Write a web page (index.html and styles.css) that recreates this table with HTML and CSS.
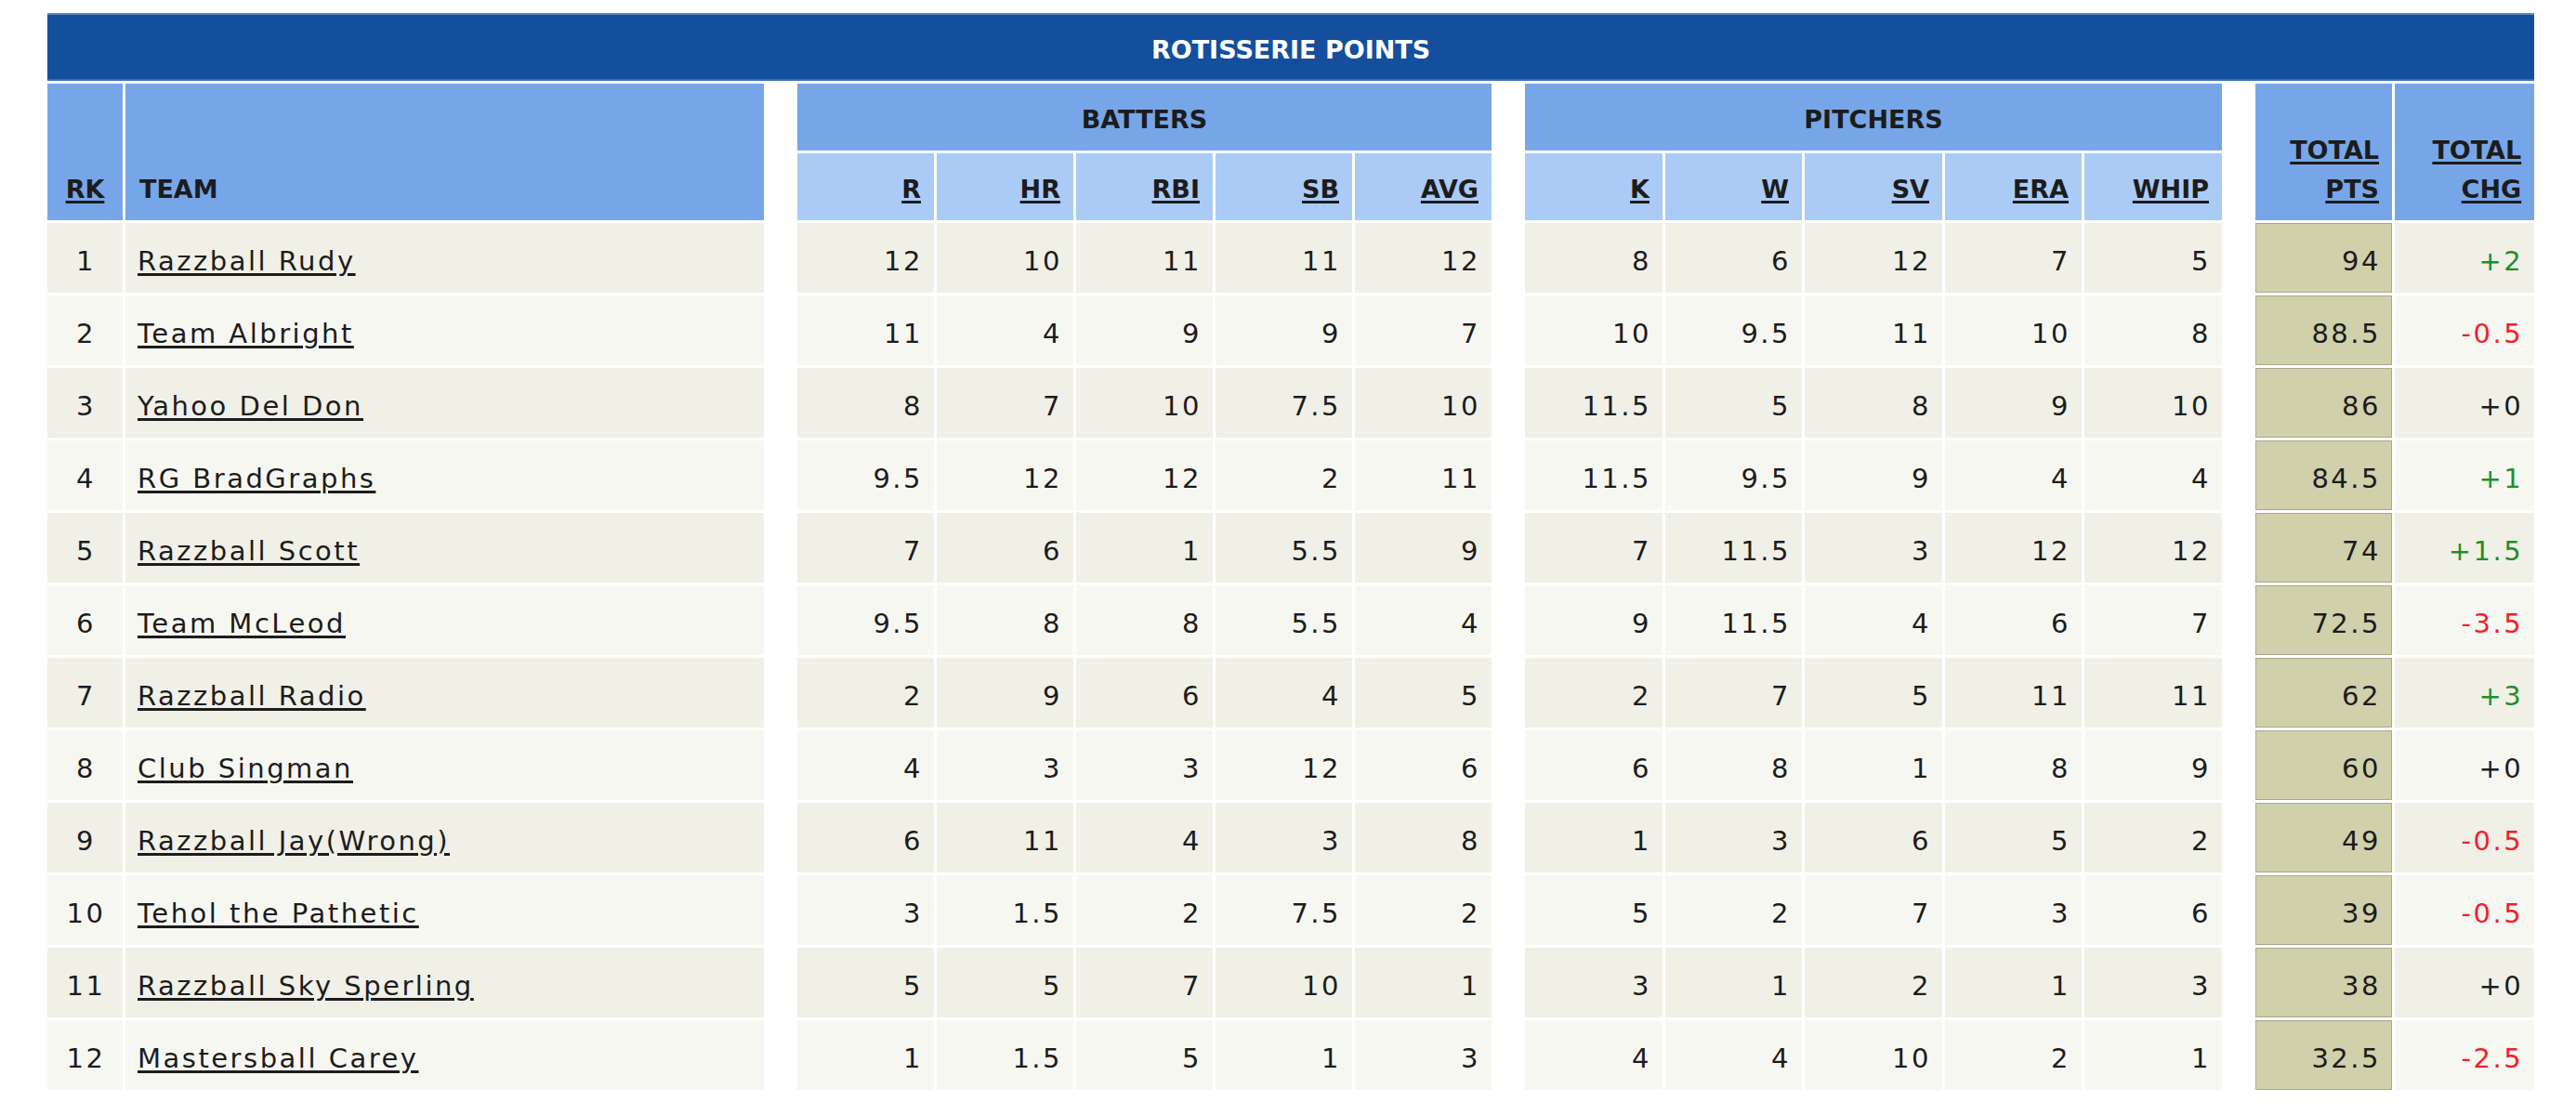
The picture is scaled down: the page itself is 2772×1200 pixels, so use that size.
FILE: index.html
```html
<!DOCTYPE html>
<html lang="en">
<head>
<meta charset="utf-8">
<title>Rotisserie Points</title>
<link rel="stylesheet" href="styles.css">
</head>
<body>
<table class="roto">
  <colgroup>
    <col class="c-rk"><col class="c-team"><col class="c-sp">
    <col class="c-b"><col class="c-b"><col class="c-b"><col class="c-b"><col class="c-b">
    <col class="c-sp">
    <col class="c-p1"><col class="c-p2"><col class="c-p1"><col class="c-p2"><col class="c-p1">
    <col class="c-sp">
    <col class="c-pts"><col class="c-chg">
  </colgroup>
  <thead>
    <tr class="r-title"><th colspan="17" class="title">ROTISSERIE POINTS</th></tr>
    <tr class="r-group">
      <th rowspan="2" class="h-rk"><a href="#">RK</a></th>
      <th rowspan="2" class="h-team">TEAM</th>
      <td rowspan="2" class="sp"></td>
      <th colspan="5" class="group">BATTERS</th>
      <td rowspan="2" class="sp"></td>
      <th colspan="5" class="group">PITCHERS</th>
      <td rowspan="2" class="sp"></td>
      <th rowspan="2" class="h-total"><a href="#">TOTAL</a><br><a href="#">PTS</a></th>
      <th rowspan="2" class="h-total"><a href="#">TOTAL</a><br><a href="#">CHG</a></th>
    </tr>
    <tr class="r-sub">
      <th class="stat"><a href="#">R</a></th>
      <th class="stat"><a href="#">HR</a></th>
      <th class="stat"><a href="#">RBI</a></th>
      <th class="stat"><a href="#">SB</a></th>
      <th class="stat"><a href="#">AVG</a></th>
      <th class="stat"><a href="#">K</a></th>
      <th class="stat"><a href="#">W</a></th>
      <th class="stat"><a href="#">SV</a></th>
      <th class="stat"><a href="#">ERA</a></th>
      <th class="stat"><a href="#">WHIP</a></th>
    </tr>
  </thead>
  <tbody>
    <tr><td class="rk">1</td><td class="team"><a href="#">Razzball Rudy</a></td><td class="sp"></td><td>12</td><td>10</td><td>11</td><td>11</td><td>12</td><td class="sp"></td><td>8</td><td>6</td><td>12</td><td>7</td><td>5</td><td class="sp"></td><td class="pts">94</td><td class="chg up">+2</td></tr>
    <tr><td class="rk">2</td><td class="team"><a href="#">Team Albright</a></td><td class="sp"></td><td>11</td><td>4</td><td>9</td><td>9</td><td>7</td><td class="sp"></td><td>10</td><td>9.5</td><td>11</td><td>10</td><td>8</td><td class="sp"></td><td class="pts">88.5</td><td class="chg down">-0.5</td></tr>
    <tr><td class="rk">3</td><td class="team"><a href="#">Yahoo Del Don</a></td><td class="sp"></td><td>8</td><td>7</td><td>10</td><td>7.5</td><td>10</td><td class="sp"></td><td>11.5</td><td>5</td><td>8</td><td>9</td><td>10</td><td class="sp"></td><td class="pts">86</td><td class="chg">+0</td></tr>
    <tr><td class="rk">4</td><td class="team"><a href="#">RG BradGraphs</a></td><td class="sp"></td><td>9.5</td><td>12</td><td>12</td><td>2</td><td>11</td><td class="sp"></td><td>11.5</td><td>9.5</td><td>9</td><td>4</td><td>4</td><td class="sp"></td><td class="pts">84.5</td><td class="chg up">+1</td></tr>
    <tr><td class="rk">5</td><td class="team"><a href="#">Razzball Scott</a></td><td class="sp"></td><td>7</td><td>6</td><td>1</td><td>5.5</td><td>9</td><td class="sp"></td><td>7</td><td>11.5</td><td>3</td><td>12</td><td>12</td><td class="sp"></td><td class="pts">74</td><td class="chg up">+1.5</td></tr>
    <tr><td class="rk">6</td><td class="team"><a href="#">Team McLeod</a></td><td class="sp"></td><td>9.5</td><td>8</td><td>8</td><td>5.5</td><td>4</td><td class="sp"></td><td>9</td><td>11.5</td><td>4</td><td>6</td><td>7</td><td class="sp"></td><td class="pts">72.5</td><td class="chg down">-3.5</td></tr>
    <tr><td class="rk">7</td><td class="team"><a href="#">Razzball Radio</a></td><td class="sp"></td><td>2</td><td>9</td><td>6</td><td>4</td><td>5</td><td class="sp"></td><td>2</td><td>7</td><td>5</td><td>11</td><td>11</td><td class="sp"></td><td class="pts">62</td><td class="chg up">+3</td></tr>
    <tr><td class="rk">8</td><td class="team"><a href="#">Club Singman</a></td><td class="sp"></td><td>4</td><td>3</td><td>3</td><td>12</td><td>6</td><td class="sp"></td><td>6</td><td>8</td><td>1</td><td>8</td><td>9</td><td class="sp"></td><td class="pts">60</td><td class="chg">+0</td></tr>
    <tr><td class="rk">9</td><td class="team"><a href="#">Razzball Jay(Wrong)</a></td><td class="sp"></td><td>6</td><td>11</td><td>4</td><td>3</td><td>8</td><td class="sp"></td><td>1</td><td>3</td><td>6</td><td>5</td><td>2</td><td class="sp"></td><td class="pts">49</td><td class="chg down">-0.5</td></tr>
    <tr><td class="rk">10</td><td class="team"><a href="#">Tehol the Pathetic</a></td><td class="sp"></td><td>3</td><td>1.5</td><td>2</td><td>7.5</td><td>2</td><td class="sp"></td><td>5</td><td>2</td><td>7</td><td>3</td><td>6</td><td class="sp"></td><td class="pts">39</td><td class="chg down">-0.5</td></tr>
    <tr><td class="rk">11</td><td class="team"><a href="#">Razzball Sky Sperling</a></td><td class="sp"></td><td>5</td><td>5</td><td>7</td><td>10</td><td>1</td><td class="sp"></td><td>3</td><td>1</td><td>2</td><td>1</td><td>3</td><td class="sp"></td><td class="pts">38</td><td class="chg">+0</td></tr>
    <tr><td class="rk">12</td><td class="team"><a href="#">Mastersball Carey</a></td><td class="sp"></td><td>1</td><td>1.5</td><td>5</td><td>1</td><td>3</td><td class="sp"></td><td>4</td><td>4</td><td>10</td><td>2</td><td>1</td><td class="sp"></td><td class="pts">32.5</td><td class="chg down">-2.5</td></tr>
  </tbody>
</table>
</body>
</html>
```

FILE: styles.css
```css
html, body {
  margin: 0;
  padding: 0;
  background: #ffffff;
}

.roto {
  margin: 11px 0 0 48px;
  width: 2682px;
  table-layout: fixed;
  border-collapse: separate;
  border-spacing: 3px;
  font-family: "DejaVu Sans", Verdana, sans-serif;
  color: #1c1c1c;
}

.c-rk { width: 81px; }
.c-team { width: 687px; }
.c-sp { width: 30px; }
.c-b { width: 147px; }
.c-p1 { width: 148px; }
.c-p2 { width: 147px; }
.c-pts { width: 147px; }
.c-chg { width: 150px; }

.roto a {
  color: inherit;
  text-decoration: underline;
  text-decoration-thickness: 3px;
  text-underline-offset: 3px;
}

/* header cells */
.roto th {
  font-weight: bold;
  font-size: 27px;
  padding: 0;
  white-space: nowrap;
}

.r-title { height: 73px; }
.r-group { height: 72px; }
.r-sub { height: 72px; }

.roto th.title {
  background: #134f9d;
  color: #ffffff;
  text-align: center;
  vertical-align: middle;
  padding-top: 5px;
  box-shadow: inset 0 2px 0 #5f86c4, inset 0 -2px 0 #3d6cb4;
}

.roto th.group {
  background: #77a6e8;
  text-align: center;
  vertical-align: middle;
  padding-top: 4px;
}

.roto th.h-rk,
.roto th.h-team,
.roto th.h-total,
.roto th.stat {
  vertical-align: bottom;
  line-height: 42px;
  padding-bottom: 12px;
}

.roto th.h-rk {
  background: #77a6e8;
  text-align: center;
}

.roto th.h-team {
  background: #77a6e8;
  text-align: left;
  padding-left: 15px;
}

.roto th.h-total {
  background: #77a6e8;
  text-align: right;
  padding-right: 14px;
}

.roto th.stat {
  background: #abcbf7;
  text-align: right;
  padding-right: 14px;
}

.sp {
  background: transparent;
  padding: 0;
}

/* body cells */
.roto tbody tr { height: 75px; }

.roto tbody td {
  font-size: 29px;
  letter-spacing: 2.5px;
  text-align: right;
  vertical-align: middle;
  padding: 7px 12px 0 0;
  white-space: nowrap;
  background: #f0f0e7;
}

.roto tbody tr:nth-child(even) td {
  background: #f7f7f2;
}

.roto tbody td.sp,
.roto tbody tr:nth-child(even) td.sp {
  background: transparent;
  padding: 0;
}

.roto tbody td.rk {
  text-align: center;
  padding-right: 0;
  padding-left: 2px;
}

.roto tbody td.team {
  text-align: left;
  padding-left: 13px;
}

.roto tbody td.pts,
.roto tbody tr:nth-child(even) td.pts {
  background: #d0d0ab;
  border: 1px solid #a8a890;
  padding-right: 11px;
}

.chg.up { color: #1f8f28; }
.chg.down { color: #f0202a; }
```
